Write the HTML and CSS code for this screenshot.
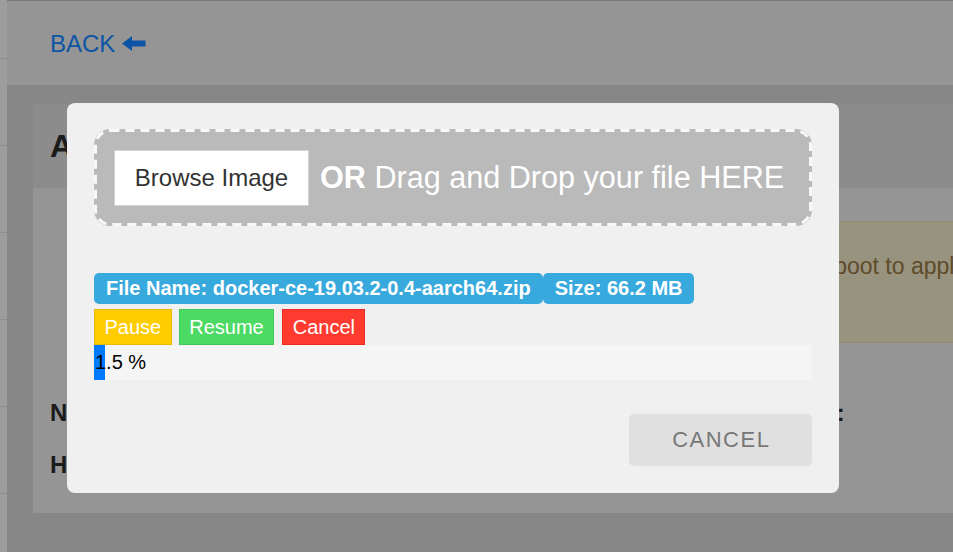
FILE: index.html
```html
<!DOCTYPE html>
<html lang="en">
<head>
<meta charset="utf-8">
<title>Upload Image</title>
<link rel="stylesheet" href="styles.css">
</head>
<body>
<div class="page">
  <aside class="rail">
    <div class="rail-item rail-first"></div>
    <div class="rail-item"></div>
    <div class="rail-item"></div>
    <div class="rail-item"></div>
    <div class="rail-item"></div>
    <div class="rail-item"></div>
  </aside>
  <div class="main">
    <header class="topbar">
      <a class="back" href="#">BACK <svg class="back-icon" width="24" height="15" viewBox="0 0 24 15"><path d="M0 7.5 L10 0 L10 4.5 L23.5 4.5 L23.5 10.5 L10 10.5 L10 15 Z" fill="currentColor"/></svg></a>
    </header>
    <section class="content">
      <div class="card">
        <div class="card-head"><h1 class="card-title">Apply Firmware Image</h1></div>
        <div class="card-body">
          <div class="alert">Please reboot to apply</div>
          <div class="info-row"><span>Name</span><span>Current:</span></div>
          <div class="info-row"><span>Host</span><span></span></div>
        </div>
      </div>
    </section>
  </div>
</div>

<div class="modal">
  <div class="dropzone">
    <button class="browse" type="button">Browse Image</button>
    <span class="drop-text"><b>OR</b> Drag and Drop your file HERE</span>
  </div>
  <div class="file-info">
    <span class="badge">File Name: docker-ce-19.03.2-0.4-aarch64.zip</span>
    <span class="badge">Size: 66.2 MB</span>
  </div>
  <div class="controls">
    <button class="ctl ctl-pause" type="button">Pause</button>
    <button class="ctl ctl-resume" type="button">Resume</button>
    <button class="ctl ctl-cancel" type="button">Cancel</button>
  </div>
  <div class="progress">
    <div class="progress-fill" style="width:1.5%"></div>
    <div class="progress-label">1.5 %</div>
  </div>
  <div class="modal-foot">
    <button class="cancel-btn" type="button">CANCEL</button>
  </div>
</div>
</body>
</html>
```
FILE: styles.css
```css
html, body {
  margin: 0;
  padding: 0;
}
body {
  width: 953px;
  height: 552px;
  overflow: hidden;
  font-family: "Liberation Sans", Arial, sans-serif;
  background: #878787;
  position: relative;
}
.page {
  display: flex;
  height: 552px;
}
.rail {
  width: 7px;
  flex: none;
  background: #9d9d9d;
}
.rail-item {
  height: 86px;
  border-bottom: 1px solid #8e8e8e;
}
.rail-first {
  height: 58px;
}
.main {
  flex: 1;
  min-width: 0;
  background: #878787;
}
.topbar {
  height: 85px;
  box-sizing: border-box;
  border-top: 1px solid #767676;
  background: #959595;
  display: flex;
  align-items: center;
  padding-left: 43px;
}
.back {
  color: #0c55a6;
  text-decoration: none;
  font-size: 24px;
  display: flex;
  align-items: center;
  white-space: pre;
  margin-top: 1px;
}
.back-icon {
  display: block;
}
.content {
  padding: 19px 0 0 26px;
}
.card {
  width: 1000px;
  height: 409px;
  background: #959595;
}
.card-head {
  height: 84px;
  background: #8c8c8c;
  padding-left: 17px;
  display: flex;
  align-items: center;
}
.card-title {
  margin: 0;
  font-size: 32px;
  font-weight: bold;
  color: #1b1b1b;
}
.card-body {
  padding: 33px 0 0 17px;
}
.alert {
  margin-left: 250px;
  height: 122px;
  box-sizing: border-box;
  background: #97937f;
  border: 1px solid #908a72;
  color: #5e4b2b;
  font-size: 23px;
  padding: 31px 15px 0 436px;
  white-space: nowrap;
}
.info-row {
  display: grid;
  grid-template-columns: 700px auto;
  font-size: 24px;
  font-weight: bold;
  color: #1b1b1b;
  margin-top: 56px;
}
.info-row + .info-row {
  margin-top: 24px;
}

/* Modal */
.modal {
  position: absolute;
  left: 67px;
  top: 103px;
  width: 772px;
  box-sizing: border-box;
  padding: 26px 27px 27px;
  background: #f0f0f0;
  border-radius: 8px;
}
.dropzone {
  height: 97px;
  box-sizing: border-box;
  border-radius: 16px;
  background-color: #bababa;
  background-image: url("data:image/svg+xml,%3Csvg xmlns='http://www.w3.org/2000/svg' width='718' height='97'%3E%3Crect x='1.5' y='1.5' width='715' height='94' rx='15' ry='15' fill='none' stroke='%23f8f8f8' stroke-width='3' stroke-dasharray='9 6'/%3E%3C/svg%3E");
  background-repeat: no-repeat;
  display: flex;
  align-items: center;
  padding: 0 20px;
}
.browse {
  width: 195px;
  height: 56px;
  box-sizing: border-box;
  background: #fff;
  border: 1px solid #d2d2d2;
  font-family: inherit;
  font-size: 24px;
  color: #333;
  padding: 0;
}
.drop-text {
  margin-left: 11px;
  font-size: 30.6px;
  color: #fff;
  white-space: nowrap;
}
.file-info {
  margin-top: 47px;
  display: flex;
}
.badge {
  height: 31px;
  line-height: 31px;
  padding: 0 12px;
  background: #38a9dc;
  color: #fff;
  font-weight: bold;
  font-size: 20px;
  border-radius: 5px;
  white-space: nowrap;
}
.controls {
  margin-top: 5px;
  display: flex;
  gap: 7px;
}
.ctl {
  height: 36px;
  padding: 0 9.5px;
  border: 1px solid;
  font-family: inherit;
  font-size: 20px;
  color: #fff;
}
.ctl-pause {
  background: #ffcc00;
  border-color: #ebb800;
}
.ctl-resume {
  background: #4cd964;
  border-color: #42c85a;
}
.ctl-cancel {
  background: #ff3b30;
  border-color: #ec2a20;
  margin-left: 1px;
}
.progress {
  display: grid;
  height: 35px;
  background: #f5f5f5;
}
.progress-fill,
.progress-label {
  grid-area: 1 / 1;
}
.progress-fill {
  background: #007aff;
  height: 100%;
}
.progress-label {
  font-size: 20px;
  color: #000;
  line-height: 35px;
  padding-left: 1px;
}
.modal-foot {
  margin-top: 34px;
  display: flex;
  justify-content: flex-end;
}
.cancel-btn {
  width: 183px;
  height: 52px;
  border: none;
  border-radius: 5px;
  background: #e0e0e0;
  color: #777;
  font-family: inherit;
  font-size: 22px;
  letter-spacing: 1.5px;
  padding: 0 0 0 1.5px;
}
```
